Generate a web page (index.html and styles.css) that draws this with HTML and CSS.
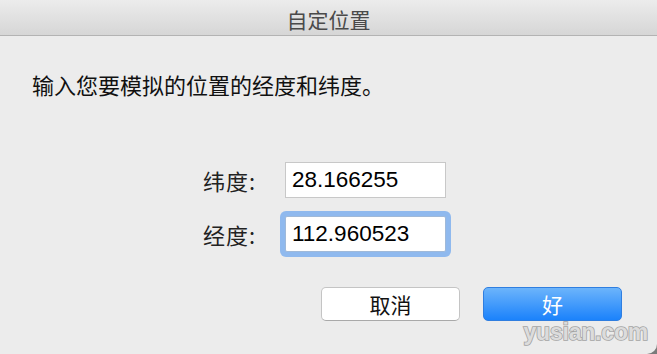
FILE: index.html
```html
<!DOCTYPE html>
<html lang="zh-CN">
<head>
    <meta charset="UTF-8">
    <title>自定位置</title>
    <link rel="stylesheet" href="styles.css">
</head>
<body>
    <div class="window">
        <div class="titlebar">自定位置</div>

        <p class="prompt">输入您要模拟的位置的经度和纬度。</p>

        <div class="form">
            <label for="lat">纬度:</label>
            <input type="text" id="lat" value="28.166255">
            <label for="lng">经度:</label>
            <input type="text" id="lng" value="112.960523" class="focused">
        </div>

        <div class="actions">
            <button class="cancel">取消</button>
            <button class="ok">好</button>
        </div>

        <div class="watermark">yusian.com</div>
    </div>
</body>
</html>
```

FILE: styles.css
```css
html {
    background: #7a7a7a;
}
body {
    margin: 0;
    font-family: "Noto Sans CJK SC", sans-serif;
}
.window {
    position: relative;
    width: 657px;
    height: 354px;
    background: #ececec;
    border-bottom-right-radius: 10px;
    overflow: hidden;
}
.titlebar {
    height: 35px;
    line-height: 38px;
    text-align: center;
    font-size: 21px;
    color: #4a4a4a;
    background: linear-gradient(#ececec, #d6d6d6);
    border-bottom: 1px solid #b3b3b3;
}
.prompt {
    margin: 36px 0 0 32px;
    font-size: 22px;
    line-height: 24px;
    color: #111;
}
.form {
    display: grid;
    grid-template-columns: 59px 161px;
    column-gap: 23px;
    row-gap: 18px;
    align-items: center;
    margin-top: 66px;
    padding-left: 203px;
}
.form label {
    font-size: 22px;
    color: #222;
    line-height: 36px;
    letter-spacing: 1px;
}
.form input {
    box-sizing: border-box;
    width: 161px;
    height: 36px;
    margin: 0;
    padding: 0 6px;
    border: 1px solid #c8c8c8;
    background: #fff;
    font-family: "Liberation Sans", Arial, sans-serif;
    font-size: 22.5px;
    color: #000;
    outline: none;
}
.form input.focused {
    border-color: #9fb9d9;
    border-radius: 2px;
    box-shadow: 0 0 0 5px #8fb9ee;
}
.actions {
    display: flex;
    justify-content: flex-end;
    gap: 23px;
    margin-top: 35px;
    padding-right: 35px;
}
.actions button {
    width: 139px;
    height: 34px;
    border-radius: 5px;
    font-family: "Noto Sans CJK SC", sans-serif;
    font-size: 21px;
    line-height: 30px;
    padding: 0;
    cursor: pointer;
}
.actions .cancel {
    background: #fff;
    border: 1px solid #c4c4c4;
    border-bottom-color: #a9a9a9;
    color: #111;
}
.actions .ok {
    background: linear-gradient(#6cb4fb, #1b82fb);
    border: 1px solid #2f7ee0;
    color: #fff;
}
.watermark {
    position: absolute;
    right: 9px;
    bottom: 8px;
    font-family: "Liberation Sans", Arial, sans-serif;
    font-weight: bold;
    font-size: 23px;
    letter-spacing: -0.2px;
    color: #dcdcdc;
    -webkit-text-stroke: 1.6px #a4a4a4;
    paint-order: stroke fill;
}
```
